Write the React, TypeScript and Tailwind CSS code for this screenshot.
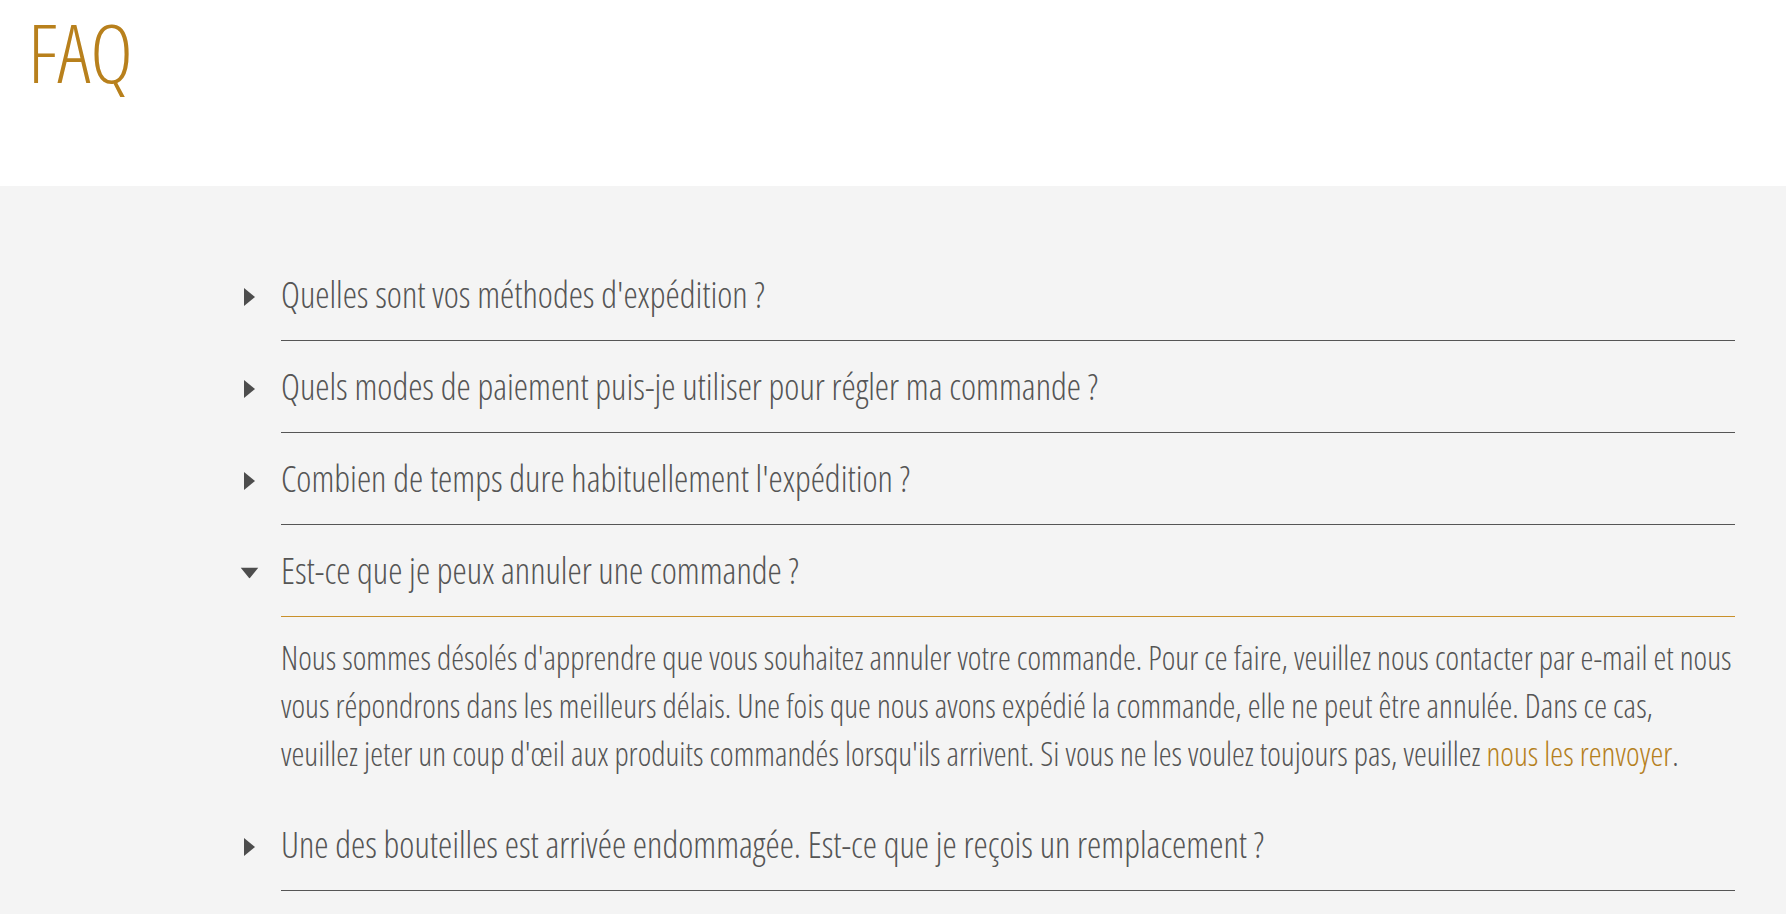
import React, { useState } from 'react';

interface FaqItem {
  question: string;
  answer?: React.ReactNode;
}

const items: FaqItem[] = [
  { question: "Quelles sont vos méthodes d'expédition ?" },
  { question: 'Quels modes de paiement puis-je utiliser pour régler ma commande ?' },
  { question: "Combien de temps dure habituellement l'expédition ?" },
  {
    question: 'Est-ce que je peux annuler une commande ?',
    answer: (
      <>
        Nous sommes désolés d'apprendre que vous souhaitez annuler votre commande. Pour ce faire, veuillez nous
        contacter par e-mail et nous vous répondrons dans les meilleurs délais. Une fois que nous avons expédié la
        commande, elle ne peut être annulée. Dans ce cas, veuillez jeter un coup d'œil aux produits commandés
        lorsqu'ils arrivent. Si vous ne les voulez toujours pas, veuillez{' '}
        <a href="#" className="text-[#b5801c]">
          nous les renvoyer
        </a>
        .
      </>
    ),
  },
  { question: 'Une des bouteilles est arrivée endommagée. Est-ce que je reçois un remplacement ?' },
];

const Caret = ({ open }: { open: boolean }) => (
  <svg
    width="11"
    height="18"
    viewBox="0 0 11 18"
    className={open ? 'rotate-90 fill-[#4d4d4d]' : 'fill-[#4d4d4d]'}
  >
    <path d="M0 0 L11 9 L0 18 Z" />
  </svg>
);

export default function App() {
  const [openIndex, setOpenIndex] = useState<number | null>(3);

  return (
    <div className="min-h-screen bg-[#f4f4f4] font-['Open_Sans',sans-serif] font-light [font-stretch:75%]">
      <header className="h-[186px] bg-white pl-[28px]">
        <h1 className="text-[81px] leading-[103px] text-[#b8801c]">FAQ</h1>
      </header>

      <section className="pl-[244px] pr-[51px] pt-[63px]">
        {items.map((item, i) => {
          const open = openIndex === i;
          return (
            <div key={i} className="flex">
              <div className="flex w-[37px] shrink-0 items-start pt-[39px]">
                <Caret open={open} />
              </div>
              <div className="flex-1">
                <button
                  onClick={() => setOpenIndex(open ? null : i)}
                  className={
                    'block w-full border-b pt-[19px] pb-[18px] text-left text-[36px] leading-[54px] text-[#555] ' +
                    (open ? 'border-[#c9902a]' : 'border-[#555]')
                  }
                >
                  {item.question}
                </button>
                {open && item.answer && (
                  <p className="pt-[17px] pb-[21px] text-[32.5px] leading-[48px] text-[#555]">{item.answer}</p>
                )}
              </div>
            </div>
          );
        })}
      </section>
    </div>
  );
}
